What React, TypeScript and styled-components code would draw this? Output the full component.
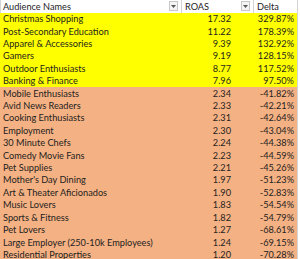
import React from "react";
import styled, { createGlobalStyle } from "styled-components";

const Global = createGlobalStyle`
  html, body { margin: 0; padding: 0; background: #ffffff; }
  body { font-family: "Lato", "Liberation Sans", sans-serif; }
`;

const Sheet = styled.div`
  width: 300px;
  height: 259px;
  overflow: hidden;
  background: #ffffff;
  display: grid;
  grid-template-columns: 181px 72px 44px 3px;
  grid-auto-rows: 12.42px;
  grid-template-rows: 12.5px;
  font-size: 9.2px;
  color: #1e1e1e;
`;

const HeadCell = styled.div<{ $pl?: number }>`
  display: flex;
  align-items: center;
  background: #ffffff;
  padding-left: ${(p) => p.$pl ?? 3}px;
  position: relative;
  border-left: 1px solid #d4d4d4;
  white-space: nowrap;
  box-sizing: border-box;
`;

const FilterBtn = styled.span`
  position: absolute;
  right: 3px;
  top: 1px;
  width: 9px;
  height: 10px;
  box-sizing: border-box;
  border: 1px solid #c8c8c8;
  background: #f4f4f4;
  display: flex;
  align-items: center;
  justify-content: center;
`;

const Cell = styled.div<{ $bg: string; $align?: string; $pr?: number }>`
  background: ${(p) => p.$bg};
  display: flex;
  align-items: center;
  justify-content: ${(p) => (p.$align === "right" ? "flex-end" : "flex-start")};
  padding-left: ${(p) => (p.$align === "right" ? 0 : 3)}px;
  padding-right: ${(p) => p.$pr ?? 0}px;
  white-space: nowrap;
  overflow: hidden;
  box-sizing: border-box;
`;

const Edge = styled.div`
  background: #ffffff;
  border-left: 1px solid #d4d4d4;
  box-sizing: border-box;
`;

const rows: [string, string, string, boolean][] = [
  ["Christmas Shopping", "17.32", "329.87%", true],
  ["Post-Secondary Education", "11.22", "178.39%", true],
  ["Apparel & Accessories", "9.39", "132.92%", true],
  ["Gamers", "9.19", "128.15%", true],
  ["Outdoor Enthusiasts", "8.77", "117.52%", true],
  ["Banking & Finance", "7.96", "97.50%", true],
  ["Mobile Enthusiasts", "2.34", "-41.82%", false],
  ["Avid News Readers", "2.33", "-42.21%", false],
  ["Cooking Enthusiasts", "2.31", "-42.64%", false],
  ["Employment", "2.30", "-43.04%", false],
  ["30 Minute Chefs", "2.24", "-44.38%", false],
  ["Comedy Movie Fans", "2.23", "-44.59%", false],
  ["Pet Supplies", "2.21", "-45.26%", false],
  ["Mother's Day Dining", "1.97", "-51.23%", false],
  ["Art & Theater Aficionados", "1.90", "-52.83%", false],
  ["Music Lovers", "1.83", "-54.54%", false],
  ["Sports & Fitness", "1.82", "-54.79%", false],
  ["Pet Lovers", "1.27", "-68.61%", false],
  ["Large Employer (250-10k Employees)", "1.24", "-69.15%", false],
  ["Residential Properties", "1.20", "-70.28%", false],
];

const Arrow = () => (
  <svg width="5" height="3" viewBox="0 0 5 3">
    <path d="M0 0 L5 0 L2.5 3 Z" fill="#555" />
  </svg>
);

export default function App() {
  return (
    <>
      <Global />
      <Sheet>
        <HeadCell $pl={2}>
          Audience Names
          <FilterBtn>
            <Arrow />
          </FilterBtn>
        </HeadCell>
        <HeadCell>
          ROAS
          <FilterBtn>
            <Arrow />
          </FilterBtn>
        </HeadCell>
        <HeadCell>Delta</HeadCell>
        <Edge />
        {rows.map(([name, roas, delta, hi]) => {
          const bg = hi ? "#ffff00" : "#f4b183";
          return (
            <React.Fragment key={name}>
              <Cell $bg={bg}>{name}</Cell>
              <Cell $bg={bg} $align="right" $pr={22}>
                {roas}
              </Cell>
              <Cell $bg={bg} $align="right" $pr={3}>
                {delta}
              </Cell>
              <Edge />
            </React.Fragment>
          );
        })}
      </Sheet>
    </>
  );
}
